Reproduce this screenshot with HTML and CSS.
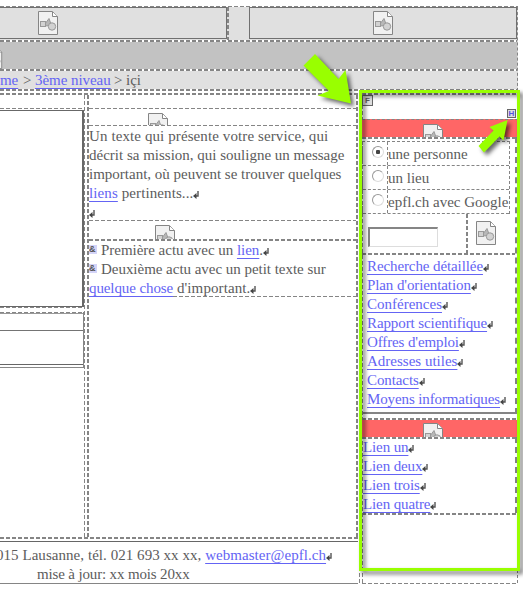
FILE: index.html
```html
<!DOCTYPE html>
<html lang="fr">
<head>
<meta charset="utf-8">
<title>Gabarit</title>
<link rel="stylesheet" href="styles.css">
</head>
<body>
<svg class="defs" width="0" height="0">
  <symbol id="image" viewBox="0 0 20 24">
    <path d="M.5.5h14l5 5v18H.5z" fill="#f1f1f1" stroke="#858585"/>
    <path d="M14.500 1v4.500h5" fill="#fff" stroke="#858585"/>
    <path d="M5.500 15L11 7.500l2.500 7z" fill="#b8b8b8" stroke="#999"/>
    <rect x="2.500" y="10.500" width="5" height="5" fill="#d2d2d2" stroke="#999"/>
    <circle cx="14" cy="15.500" r="3.700" fill="#d2d2d2" stroke="#999"/>
  </symbol>
  <symbol id="ret" viewBox="0 0 6 8">
    <path d="M5 0v5H2" fill="none" stroke="#555" stroke-width="1.400"/>
    <path d="M0 5l3.500-3v6z" fill="#444"/>
  </symbol>
</svg>
<div class="page">
  <div class="dh"></div>
  <header class="header">
    <div class="banner">
      <div class="cell cell-a"><svg class="img"><use href="#image"/></svg></div>
      <div class="dv2"></div>
      <div class="cell-gap"></div>
      <div class="cell cell-b"><svg class="img"><use href="#image"/></svg></div>
    </div>
    <div class="dh2 white"></div>
    <div class="strip"><svg class="img"><use href="#image"/></svg></div>
    <div class="dh2 white"></div>
    <nav class="crumbs"><a class="c1">me</a><span class="c2">&gt;</span><a class="c3">3ème niveau</a><span class="c4">&gt; içi</span></nav>
    <div class="dh2 white"></div>
  </header>
  <div class="body">
    <div class="wide">
      <div class="dh2"></div>
      <div class="columns">
        <div class="left">
          <div class="dh"></div>
          <div class="box"></div>
          <div class="dh"></div>
          <div class="lower">
            <div class="dh"></div>
            <div class="lower-a"></div>
            <div class="lower-b"></div>
            <div class="lower-c"></div>
          </div>
        </div>
        <div class="dv"></div><div class="gutter"></div><div class="dv2"></div>
        <main class="middle">
          <div class="dh top"></div>
          <div class="clip clip-1"><svg class="img"><use href="#image"/></svg></div>
          <div class="dh"></div>
          <div class="text intro">
            <p class="t1">Un texte qui présente votre service, qui</p>
            <p class="t2">décrit sa mission, qui souligne un message</p>
            <p class="t3">important, où peuvent se trouver quelques</p>
            <p class="t4"><a>liens</a> pertinents...<svg class="ret"><use href="#ret"/></svg></p>
            <p><svg class="ret"><use href="#ret"/></svg></p>
          </div>
          <div class="dh"></div>
          <div class="clip clip-2"><svg class="img"><use href="#image"/></svg></div>
          <div class="dh2"></div>
          <div class="text news">
            <p class="n1"><i class="bullet">&amp;</i>Première actu avec un <a>lien</a>.<svg class="ret"><use href="#ret"/></svg></p>
            <p class="n2"><i class="bullet">&amp;</i>Deuxième actu avec un petit texte sur</p>
            <p class="n3"><a>quelque chose</a> d'important.<svg class="ret"><use href="#ret"/></svg></p>
          </div>
          <div class="dh"></div>
        </main>
        <div class="dv2"></div>
      </div>
      <div class="dh2"></div>
      <footer class="footer">
        <p class="f1">015 Lausanne, tél. 021 693 xx xx, <a>webmaster@epfl.ch</a><svg class="ret"><use href="#ret"/></svg></p>
        <p class="f2">mise à jour: xx mois 20xx</p>
      </footer>
    </div>
    <div class="side-gap"><div class="dv"></div><div class="dv"></div></div>
    <aside class="side">
      <div class="dh2"></div>
      <div class="marks"><b class="mark f">F</b><b class="mark h">H</b></div>
      <div class="red"><svg class="img"><use href="#image"/></svg></div>
      <div class="panel">
        <div class="dh2"></div>
        <div class="radios">
          <div class="choice"><i class="radio on"></i><label class="r1">une personne</label></div>
          <div class="choice"><i class="radio"></i><label class="r2">un lieu</label></div>
          <div class="choice"><i class="radio"></i><label class="r3">epfl.ch avec Google</label></div>
        </div>
        <div class="search"><div class="field"></div><div class="dv2"></div><svg class="img"><use href="#image"/></svg></div>
        <div class="dh2"></div>
        <div class="links main-links">
          <p><a class="l1">Recherche détaillée</a><svg class="ret"><use href="#ret"/></svg></p>
          <p><a class="l2">Plan d'orientation</a><svg class="ret"><use href="#ret"/></svg></p>
          <p><a class="l3">Conférences</a><svg class="ret"><use href="#ret"/></svg></p>
          <p><a class="l4">Rapport scientifique</a><svg class="ret"><use href="#ret"/></svg></p>
          <p><a class="l5">Offres d'emploi</a><svg class="ret"><use href="#ret"/></svg></p>
          <p><a class="l6">Adresses utiles</a><svg class="ret"><use href="#ret"/></svg></p>
          <p><a class="l7">Contacts</a><svg class="ret"><use href="#ret"/></svg></p>
          <p><a class="l8">Moyens informatiques</a><svg class="ret"><use href="#ret"/></svg></p>
        </div>
      </div>
      <div class="dh2 second"></div>
      <div class="red red-2"><svg class="img"><use href="#image"/></svg></div>
      <div class="panel panel-2">
        <div class="dh2"></div>
        <div class="links small-links">
          <p><a>Lien un</a><svg class="ret"><use href="#ret"/></svg></p>
          <p><a>Lien deux</a><svg class="ret"><use href="#ret"/></svg></p>
          <p><a>Lien trois</a><svg class="ret"><use href="#ret"/></svg></p>
          <p><a>Lien quatre</a><svg class="ret"><use href="#ret"/></svg></p>
        </div>
      </div>
      <div class="dh2"></div>
      <div class="rest"></div>
      <div class="dh"></div>
    </aside>
  </div>
</div>
<svg class="callout" width="523" height="591" viewBox="0 0 523 591">
  <g class="shadowed">
    <rect x="360.500" y="91.500" width="158" height="478" fill="none" stroke="#9f0" stroke-width="3"/>
    <path d="M315 54L303.500 65.500 329 91 317.500 95.500 351 103.500 345.500 70 338.500 79z" fill="#9f0"/>
    <path d="M507.500 120L489.500 127 493.500 130.500 478.500 146 484 152.500 499.500 136.500 503.500 140.500z" fill="#9f0"/>
  </g>
</svg>
</body>
</html>
```
FILE: styles.css
```css
* { box-sizing: border-box; }
body {
  margin: 0;
  width: 523px;
  height: 591px;
  overflow: hidden;
  background: #fff;
  color: #5c5c5c;
  font: 15px/19px "Liberation Serif", serif;
}
p { margin: 0; height: 19px; white-space: nowrap; }
a { color: #6464f4; text-decoration: underline; text-underline-offset: 3px; text-decoration-thickness: 1px; text-decoration-skip-ink: none; }
.defs { position: absolute; }
.img { display: block; flex: none; width: 20px; height: 24px; }
.ret { width: 6px; height: 8px; vertical-align: -1px; }

.dh, .dh2 { height: 1px; flex: none; background: repeating-linear-gradient(90deg, #858585 0 4px, transparent 4px 6px); }
.dh2 { height: 2px; }
.dh2.white { background-color: #fff; }
.dv, .dv2 { width: 1px; flex: none; background: repeating-linear-gradient(#858585 0 4px, transparent 4px 6px); }
.dv2 { width: 2px; }

.page { padding-top: 6px; }
.page > .dh { width: 518px; }
.header { width: 518px; background: #e0e0e0; border-right: 1px dashed #858585; }
.banner { display: flex; height: 33px; }
.cell { height: 32px; border: 1px solid #707070; padding-top: 3px; }
.cell-a { width: 227px; border-left: 0; padding-left: 38px; }
.cell-gap { width: 20px; }
.cell-b { flex: 1; padding-left: 123px; }
.strip { height: 27px; background: #c2c2c2; padding-top: 5px; }
.strip .img { margin-left: -17px; height: 22px; }
.crumbs { display: flex; height: 18px; white-space: pre; letter-spacing: -.05px; }
.c1 { width: 18px; }
.c2 { width: 17px; padding-left: 5px; }
.c3 { width: 75px; }
.c4 { padding-left: 4px; }

.body { display: flex; height: 493px; }
.wide { width: 358px; flex: none; padding-top: 2px; display: flex; flex-direction: column; }
.columns { display: flex; height: 442px; }
.left { flex: none; width: 84px; padding-top: 13px; }
.box { height: 197px; margin: 1px 0 0 0; border: solid #686868; border-width: 1px 2px 1px 0; }
.left > .dh + .lower { margin-top: 4px; }
.lower { border-right: 1px solid #858585; }
.lower-a { height: 18px; border-top: 1px solid #999; border-bottom: 1px solid #747474; }
.lower-b { height: 34px; border-bottom: 1px solid #666; }
.lower-c { height: 3px; border-bottom: 1px solid #888; }
.gutter { width: 2px; flex: none; }
.middle { flex: 1; min-width: 0; }
.top { margin-top: 13px; }
.clip { height: 16px; overflow: hidden; padding: 4px 0 0 59px; }
.clip-2 { height: 18px; padding-left: 66px; }
.intro { height: 94px; padding-top: 1px; }
.t1 { letter-spacing: .1px; }
.t4 { letter-spacing: .1px; }
.news { height: 55px; }
.n1, .n2 { letter-spacing: -.03px; }
.n3 a { letter-spacing: -.1px; }
.n3 { letter-spacing: .1px; }
.bullet { display: inline-block; width: 8px; height: 9px; margin-right: 4px; background: #d4d4f8; color: #555; font: bold 9px/9px "Liberation Sans", sans-serif; vertical-align: 3px; }
.footer { flex: none; height: 43px; margin-top: 2px; border-top: 1px solid #666; border-bottom: 1px solid #858585; padding-top: 4px; }
.f1 { margin-left: -4px; letter-spacing: .05px; }
.f2 { padding-left: 37px; letter-spacing: -.15px; }

.side-gap { width: 5px; margin-top: 2px; padding-left: 1px; display: flex; justify-content: space-between; flex: none; }
.side { width: 156px; flex: none; margin-left: -1px; padding-top: 2px; display: flex; flex-direction: column; }
.marks { flex: none; height: 24px; display: flex; justify-content: space-between; align-items: flex-start; }
.mark { font: bold 8px/8px "Liberation Sans", sans-serif; text-align: center; border: 1px solid #666; background: #ddd; }
.f { width: 11px; height: 11px; line-height: 9px; }
.h { width: 9px; height: 9px; margin: 14px 2px 0 0; color: #55d; line-height: 7px; }
.red { flex: none; height: 18px; overflow: hidden; background: #f66; padding: 4px 0 0 61px; border-top: 1px dashed #858585; }
.red-2 { height: 17px; border-top: 0; padding-top: 3px; }
.panel { flex: none; height: 277px; margin-right: 1px; border-right: 2px dashed #858585; border-bottom: 2px solid #858585; }
.radios { height: 73px; width: 148px; margin-top: 2px; border: 1px dashed #858585; border-bottom: 0; }
.choice { height: 24px; display: flex; border-bottom: 1px dashed #858585; }
.radio { flex: none; width: 12px; height: 12px; margin: 4px 3px 0 9px; border: 1px solid #999; border-right-color: #ddd; border-bottom-color: #ddd; border-radius: 50%; }
.on { background: radial-gradient(circle, #444 0 2px, #fff 2.500px); }
.choice label { border-left: 1px dashed #858585; padding-top: 3px; white-space: nowrap; }
.search { display: flex; height: 39px; }
.field { width: 70px; height: 20px; margin: 13px 28px 0 6px; border: 2px solid #858585; border-right: 1px solid #ddd; border-bottom: 1px solid #ddd; }
.search .img { margin: 7px 0 0 8px; }
.main-links { padding: 2px 0 0 5px; }
.small-links { margin: -1px 0 0 1px; }
.l1, .l2, .l4, .l7 { letter-spacing: -.1px; }
.l8, .l5 { letter-spacing: -.12px; }
.small-links a { letter-spacing: -.12px; }
.second { margin-top: 4px; }
.panel-2 { height: 76px; border-bottom: 0; }
.rest { flex: 1; border-right: 1px dashed #858585; }

.callout { position: absolute; left: 0; top: 0; pointer-events: none; }
.shadowed { filter: drop-shadow(3px 3px 2px rgba(0, 0, 0, .6)); }
```
